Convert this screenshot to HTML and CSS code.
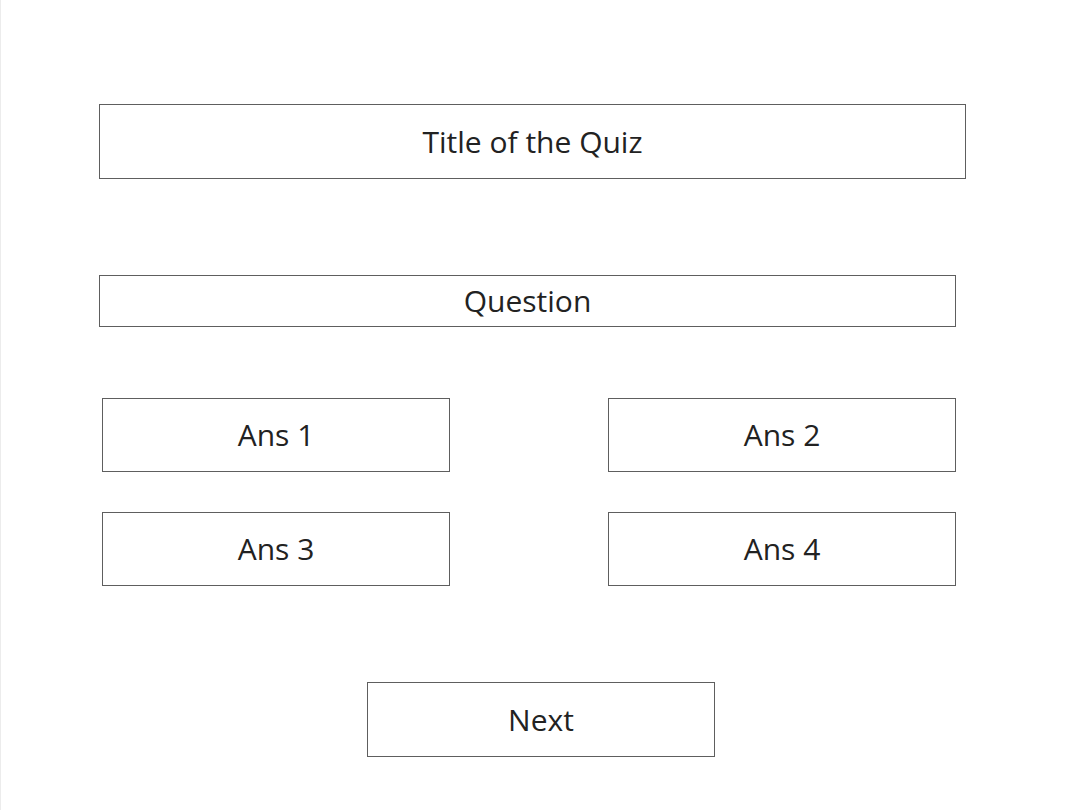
FILE: index.html
```html
<!DOCTYPE html>
<html lang="en">
<head>
<meta charset="utf-8">
<title>Quiz</title>
<link rel="stylesheet" href="styles.css">
</head>
<body>
<div class="page">
  <div class="box title">Title of the Quiz</div>
  <div class="box question">Question</div>
  <div class="answers">
    <div class="box answer">Ans 1</div>
    <div class="box answer">Ans 2</div>
    <div class="box answer">Ans 3</div>
    <div class="box answer">Ans 4</div>
  </div>
  <div class="box next">Next</div>
</div>
</body>
</html>
```
FILE: styles.css
```css
* { box-sizing: border-box; }
html, body { margin: 0; padding: 0; background: #fff; }
body {
  font-family: "Open Sans", "Liberation Sans", sans-serif;
  color: #222;
}
.page {
  width: 1080px;
  height: 810px;
  border-left: 1px solid #ececec;
  padding: 104px 0 0 98px;
  display: flex;
  flex-direction: column;
  align-items: flex-start;
}
.box {
  border: 1px solid #5e5e5e;
  display: flex;
  align-items: center;
  justify-content: center;
  font-size: 30px;
  line-height: 1;
  background: #fff;
}
.title {
  width: 867px;
  height: 75px;
}
.question {
  width: 857px;
  height: 52px;
  margin-top: 96px;
}
.answers {
  margin-top: 71px;
  margin-left: 3px;
  display: grid;
  grid-template-columns: 348px 348px;
  grid-auto-rows: 74px;
  column-gap: 158px;
  row-gap: 40px;
}
.next {
  width: 348px;
  height: 75px;
  margin-top: 96px;
  margin-left: 268px;
}
```
